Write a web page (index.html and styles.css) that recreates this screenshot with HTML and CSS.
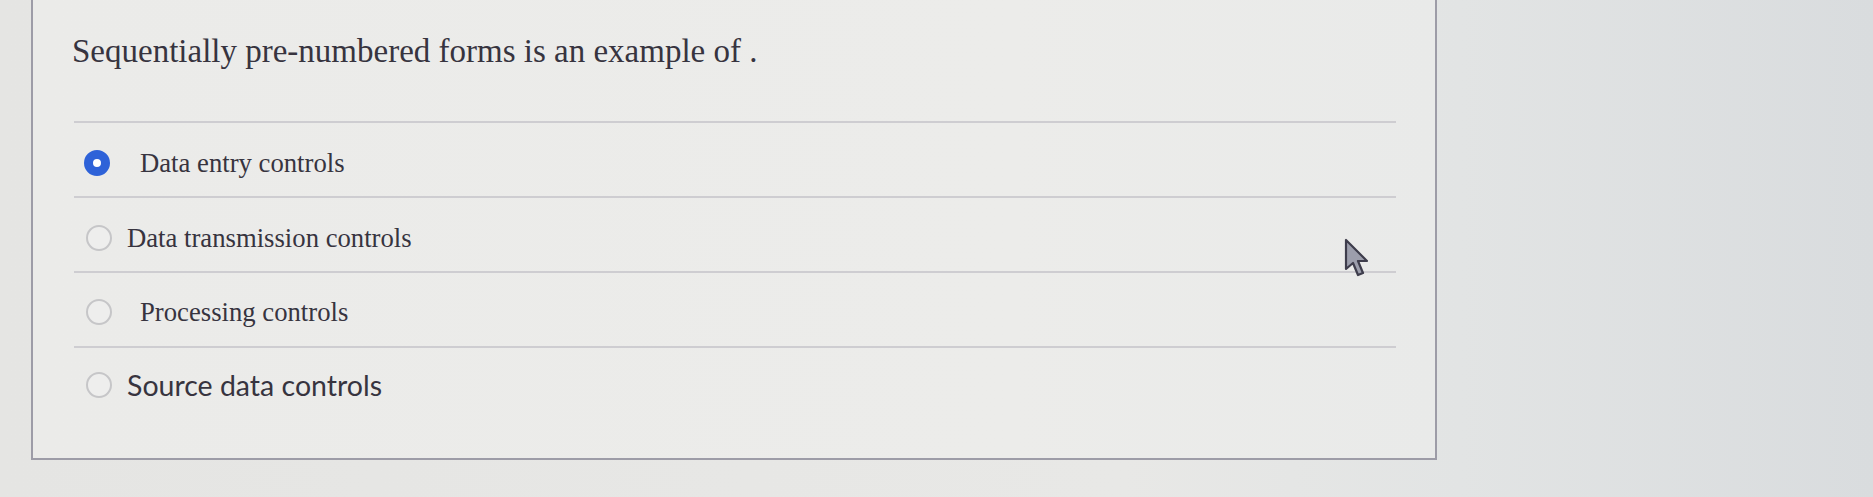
FILE: index.html
```html
<!DOCTYPE html>
<html lang="en">
<head>
<meta charset="utf-8">
<title>Question</title>
<link rel="stylesheet" href="styles.css">
</head>
<body>
<div class="page">
  <div class="card">
    <div class="question">Sequentially pre-numbered forms is an example of .</div>
    <div class="options">
      <label class="option">
        <span class="radio radio-on"></span>
        <span class="label label-serif label-wide">Data entry controls</span>
      </label>
      <label class="option">
        <span class="radio"></span>
        <span class="label label-serif">Data transmission controls</span>
      </label>
      <label class="option option-up">
        <span class="radio"></span>
        <span class="label label-serif label-wide">Processing controls</span>
      </label>
      <label class="option option-up2">
        <span class="radio"></span>
        <span class="label label-sans">Source data controls</span>
      </label>
    </div>
  </div>
</div>
<svg class="cursor" width="26" height="40" viewBox="0 0 26 40">
  <path d="M2 2 L2 31 L9 25 L14 37 L19 35 L14 23 L23 23 Z" fill="#9c9eac" stroke="#3e3d4c" stroke-width="2.2" stroke-linejoin="round"/>
</svg>
</body>
</html>
```

FILE: styles.css
```css
html, body {
  margin: 0;
  padding: 0;
}

body {
  width: 1873px;
  height: 497px;
  overflow: hidden;
  position: relative;
  background: linear-gradient(90deg, #e5e5e3 0%, #e8e8e6 60%, #e2e4e4 78%, #d9dcde 100%);
  font-family: "Liberation Serif", "Times New Roman", serif;
  color: #37343f;
}

.page {
  padding-left: 31px;
}

.card {
  width: 1402px;
  border: 2px solid #9d9ca7;
  border-top: none;
  background: linear-gradient(90deg, #ebebe9 0%, #ececea 70%, #e9eae9 100%);
  padding: 0 0 37px 0;
}

.question {
  margin: 0 0 50px 39px;
  padding-top: 31px;
  font-size: 33px;
  line-height: 40px;
}

.options {
  margin-left: 41px;
  width: 1322px;
}

.option {
  display: flex;
  align-items: center;
  border-top: 2px solid #cecdd1;
  padding-top: 6px;
  height: 67px;
}

.option-up {
  padding-top: 4px;
  height: 69px;
}

.option-up2 {
  padding-top: 1px;
  height: 72px;
}

.radio {
  flex: none;
  width: 26px;
  height: 26px;
  box-sizing: border-box;
  border-radius: 50%;
  margin-left: 12px;
  border: 2px solid #c6c6c8;
  background: #eeeeed;
}

.radio-on {
  margin-left: 10px;
  border: 9.5px solid #2e62d8;
  background: #ffffff;
}

.label {
  margin-left: 15px;
  white-space: nowrap;
}

.label-wide {
  margin-left: 28px;
}

.radio-on + .label-wide {
  margin-left: 30px;
}

.label-serif {
  font-family: "Liberation Serif", "Times New Roman", serif;
  font-size: 26.7px;
  line-height: 32px;
}

.label-sans {
  font-family: Lato, "Open Sans", sans-serif;
  font-size: 28.5px;
  line-height: 32px;
}

.cursor {
  position: absolute;
  left: 1344px;
  top: 238px;
}
```
